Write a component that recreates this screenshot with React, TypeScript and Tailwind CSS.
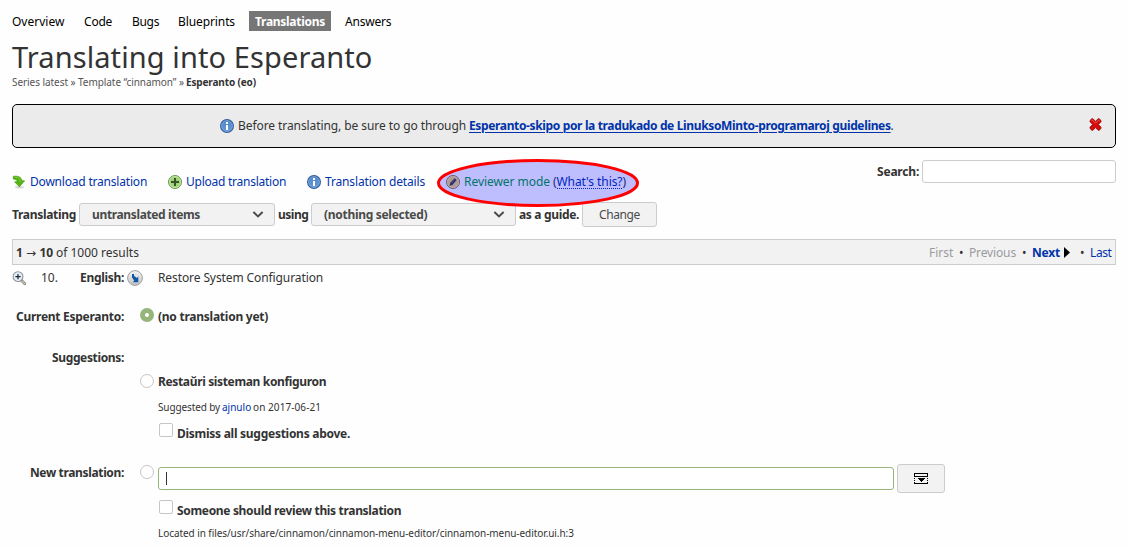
import type { ReactNode } from "react";

function InfoIcon() {
  return (
    <svg className="block h-[14px] w-[14px] shrink-0" viewBox="0 0 14 14">
      <defs>
        <linearGradient id="info" x1="0" y1="0" x2="0" y2="1">
          <stop offset="0" stopColor="#4f86cb" />
          <stop offset="1" stopColor="#6698d6" />
        </linearGradient>
      </defs>
      <circle cx="7" cy="7" r="6.4" fill="url(#info)" stroke="#35609b" strokeWidth="1.2" />
      <circle cx="7" cy="7" r="5.4" fill="none" stroke="#84ade0" strokeWidth=".7" />
      <path d="M6 3h2v2H6zM6 6h2v5H6z" fill="#fff" />
    </svg>
  );
}

function PlusIcon() {
  return (
    <svg className="block h-[14px] w-[14px] shrink-0" viewBox="0 0 14 14">
      <circle cx="7" cy="7" r="6.5" fill="#9fd57a" stroke="#6b9455" />
      <circle cx="7" cy="7" r="5.5" fill="none" stroke="#bfe5a3" strokeWidth=".9" />
      <path d="M6 3h2v3h3v2H8v3H6V8H3V6h3z" fill="#3b5229" />
    </svg>
  );
}

function DownloadIcon() {
  return (
    <svg className="block h-[14px] w-[14px] shrink-0" viewBox="0 0 14 14">
      <ellipse cx="7.5" cy="12.3" rx="4.5" ry="1.2" fill="#d8d8d8" />
      <path d="M1.3 1.4C5 .6 9.6 1.6 9.8 5.8H12.5L7.4 11.8 2.6 6.8H5.2C5.2 4.8 4 4.2 1.3 4z" fill="#55b413" stroke="#45950f" strokeWidth=".7" />
      <path d="M3 2.2C6.5 2 8.3 4 8.4 7" fill="none" stroke="#7fd344" strokeWidth=".8" />
    </svg>
  );
}

function PencilIcon() {
  return (
    <svg className="block h-[14px] w-[14px] shrink-0" viewBox="0 0 14 14">
      <circle cx="7" cy="7" r="6.5" fill="#e8cf72" stroke="#8d7a3e" />
      <circle cx="7" cy="7" r="5.5" fill="none" stroke="#f3e1a3" strokeWidth=".8" />
      <path d="M3.6 10.7l.7-2.9 4.3-4.6 2.1 1.9-4.4 4.8z" fill="#3c3c30" />
      <path d="M5.2 8.3l3.7-4" stroke="#88866f" strokeWidth=".6" />
    </svg>
  );
}

function RemoveIcon() {
  return (
    <svg className="block h-[13px] w-[13px]" viewBox="0 0 13 13">
      <path d="M1 2.5L2.8.8H4l2.5 2.6L9 .8h1.2L12 2.5v1.3L9.4 6.5 12 9.2v1.3l-1.8 1.7H9L6.5 9.6 4 12.2H2.8L1 10.5V9.2l2.6-2.7L1 3.8z" fill="#d40b0b" stroke="#a00606" strokeWidth=".8" />
      <path d="M2.3 2.9l1.1-.8 3.1 3.1 3.1-3.1 1 .7" fill="none" stroke="#f06a6a" strokeWidth=".8" />
    </svg>
  );
}

function ZoomInIcon() {
  return (
    <svg className="block h-[15px] w-[15px]" viewBox="0 0 15 15">
      <path d="M9.6 9.6l3.2 3.2" stroke="#85857e" strokeWidth="2.8" strokeLinecap="round" />
      <path d="M10 10l2.7 2.7" stroke="#cfcbbb" strokeWidth="1.2" strokeLinecap="round" />
      <circle cx="6" cy="5.6" r="4.9" fill="#e4eefa" stroke="#8f959b" strokeWidth="1.1" />
      <path d="M5.4 3h1.2v2h2v1.2h-2v2H5.4v-2h-2V5h2z" fill="#1c2733" />
    </svg>
  );
}

function CopyIcon() {
  return (
    <svg className="block h-4 w-4" viewBox="0 0 16 16">
      <defs>
        <linearGradient id="copy" x1="0" y1="0" x2="0" y2="1">
          <stop offset="0" stopColor="#f4f4f4" />
          <stop offset="1" stopColor="#c2c2c2" />
        </linearGradient>
      </defs>
      <circle cx="8" cy="8" r="7.4" fill="url(#copy)" stroke="#a0a0a0" strokeWidth="1" />
      <path d="M5 3.9h1.9l.3 2 2.6 2 1.5-1.3v5.6H5.9l1.3-1.7L5 7.6z" fill="#1258a8" />
    </svg>
  );
}

function DropdownIcon() {
  return (
    <svg className="block h-[11px] w-[14px]" viewBox="0 0 14 11" shapeRendering="crispEdges">
      <path d="M0 0h14v4H0zM1 1v2h12V1z" fill="#000" fillRule="evenodd" />
      <path d="M0 5h1v1H0zM13 5h1v1h-1zM0 7h1v1H0zM13 7h1v1h-1zM0 9h1v2H0zM13 9h1v2h-1zM1 10h12v1H1z" fill="#000" />
      <path d="M4 5h7v1h-1v1H9v1H8v1H7V8H6V7H5V6H4z" fill="#000" />
    </svg>
  );
}

function Chevron() {
  return (
    <svg className="mr-[10px] block h-[7px] w-[12px]" viewBox="0 0 12 7">
      <path d="M1.4 1l4.6 4.4L10.6 1" fill="none" stroke="#4a4a4a" strokeWidth="2" />
    </svg>
  );
}

function Select({ className, children }: { className: string; children: ReactNode }) {
  return (
    <div className={`flex h-[23px] items-center justify-between rounded-[3px] border border-[#cccccc] bg-[#f2f2f2] pl-3 font-bold leading-5 text-[#4a4a4a] ${className}`}>
      {children}
      <Chevron />
    </div>
  );
}

function Radio({ checked = false, className = "" }: { checked?: boolean; className?: string }) {
  return checked ? (
    <span className={`flex h-[14px] w-[14px] shrink-0 items-center justify-center rounded-full bg-[#96b57a] ${className}`}>
      <span className="h-1 w-1 rounded-full bg-white" />
    </span>
  ) : (
    <span className={`h-[14px] w-[14px] shrink-0 rounded-full border border-[#c6c6c6] bg-white ${className}`} />
  );
}

function Checkbox() {
  return <span className="ml-px mr-1 h-[14px] w-[14px] shrink-0 rounded-[2px] border border-[#c6c6c6] bg-white" />;
}

function Label({ children, className = "" }: { children: ReactNode; className?: string }) {
  return <div className={`flex h-5 w-28 shrink-0 justify-end font-bold ${className}`}>{children}</div>;
}

export default function App() {
  return (
    <div className="h-[546px] w-[1129px] overflow-hidden whitespace-nowrap bg-[#fefefe] pl-3 pr-[13px] pt-[11px] font-['Noto_Sans',sans-serif] text-[12px] leading-[22px] text-[#333333]">
      <nav className="flex h-5 text-black">
        <a className="w-[72px]">Overview</a>
        <a className="w-12 tracking-[-0.2px]">Code</a>
        <a className="w-[46px] tracking-[-0.3px]">Bugs</a>
        <a className="w-[71px] tracking-[-0.1px]">Blueprints</a>
        <a className="mr-[14px] w-[82px] bg-[#767676] pl-[6px] font-bold tracking-[-0.28px] text-white">Translations</a>
        <a className="tracking-[-0.2px]">Answers</a>
      </nav>

      <h1 className="mt-[6px] h-[35px] text-[29px] leading-10 tracking-[0.1px]">Translating into Esperanto</h1>
      <div className="flex h-5 text-[10px] leading-5">
        <span className="w-[174px] tracking-[-0.06px] text-[#555555]">Series latest » Template “cinnamon” »</span>
        <b className="tracking-[-0.14px]">Esperanto (eo)</b>
      </div>

      <div className="mt-3 flex h-[44px] items-start rounded-[5px] border border-black bg-[#ebebeb] pl-[207px] pt-[10px]">
        <span className="mr-1 mt-1"><InfoIcon /></span>
        <span className="w-[231px] tracking-[-0.08px]">Before translating, be sure to go through</span>
        <a className="font-bold tracking-[-0.355px] text-[#0033aa] underline decoration-1 underline-offset-2">Esperanto-skipo por la tradukado de LinuksoMinto-programaroj guidelines</a>
        <span>.</span>
        <span className="ml-auto mr-[13px] mt-[3px]"><RemoveIcon /></span>
      </div>

      <div className="flex h-[91px] justify-between">
        <div className="pt-[23px]">
          <div className="flex h-[22px] items-center text-[#0033aa]">
            <a className="flex w-[156px] items-center gap-1"><DownloadIcon /><span className="tracking-[-0.2px]">Download translation</span></a>
            <a className="flex w-[139px] items-center gap-1"><PlusIcon /><span className="tracking-[-0.25px]">Upload translation</span></a>
            <a className="flex w-[139px] items-center gap-1"><InfoIcon /><span className="tracking-[-0.15px]">Translation details</span></a>
            <div className="relative flex h-[22px] items-center">
              <PencilIcon />
              <span className="ml-1 w-[89px] tracking-[-0.05px] text-[#009933]">Reviewer mode</span>
              <span className="flex h-[22px] tracking-[-0.08px] text-[#333333]">(<span className="h-[18px] border-b border-dotted border-[#0033aa] text-[#0033aa]">What's this?</span>)</span>
              <svg className="pointer-events-none absolute -left-[9px] -top-[12px] h-[48px] w-[202px]" viewBox="0 0 202 48">
                <ellipse cx="101" cy="24" rx="99.5" ry="22.5" fill="#0000ff" fillOpacity=".25" stroke="#ff0000" strokeWidth="3" />
              </svg>
            </div>
          </div>
          <div className="mt-[9px] flex h-[25px] items-center font-bold">
            <span className="w-[67px] tracking-[-0.3px]">Translating</span>
            <Select className="w-[196px] tracking-[-0.36px]">untranslated items</Select>
            <span className="ml-[3px] w-[33px] tracking-[-0.5px]">using</span>
            <Select className="w-[205px] tracking-[-0.3px]">(nothing selected)</Select>
            <span className="ml-[3px] w-[63px] tracking-[-0.33px]">as a guide.</span>
            <button className="flex h-[25px] w-[75px] items-center justify-center rounded-[3px] border border-[#cccccc] bg-[#f2f2f2] font-normal tracking-[-0.38px] text-[#4a4a4a]">Change</button>
          </div>
        </div>
        <div className="flex pt-3">
          <span className="w-[45px] pt-px font-bold tracking-[-0.2px]">Search:</span>
          <div className="h-[23px] w-[194px] rounded-[3px] border border-[#cccccc] bg-white" />
        </div>
      </div>

      <div className="flex h-[26px] border border-[#cccccc] bg-[#f2f2f2] pl-[3px] pr-1 pt-[2px]">
        <b className="flex w-10 tracking-[-0.3px]">
          1
          <span className="w-[17px] text-center font-['DejaVu_Sans'] text-[12px] font-normal tracking-normal">→</span>
          10
        </b>
        <span>of 1000 results</span>
        <div className="ml-auto flex text-[#9a9a9f]">
          <span className="w-[30px]">First</span>
          <span className="w-[10px] text-[#333333]">•</span>
          <span className="w-[53px] tracking-[-0.14px]">Previous</span>
          <span className="w-[10px] text-[#333333]">•</span>
          <b className="w-[32px] tracking-[-0.2px] text-[#0033aa]">Next</b>
          <svg className="mr-[10px] mt-[5px] block h-[11px] w-[6px]" viewBox="0 0 6 11"><path d="M0 0l6 5.5L0 11z" fill="#000" /></svg>
          <span className="w-[10px] text-[#333333]">•</span>
          <span className="w-[21px] tracking-[-0.4px] text-[#0033aa]">Last</span>
        </div>
      </div>

      <div className="mt-[2px] flex h-5">
        <span className="w-[29px] pt-1"><ZoomInIcon /></span>
        <span className="w-[39px]">10.</span>
        <b className="w-[47px] tracking-[-0.3px]">English:</b>
        <span className="w-[31px] pt-[3px]"><CopyIcon /></span>
        <span className="tracking-[-0.1px]">Restore System Configuration</span>
      </div>

      <div className="mt-[19px] flex h-5">
        <Label className="tracking-[-0.28px]">Current Esperanto:</Label>
        <Radio checked className="ml-4 mr-1 mt-[2px]" />
        <b className="tracking-[-0.25px]">(no translation yet)</b>
      </div>

      <div className="mt-[21px] flex">
        <Label className="tracking-[-0.35px]">Suggestions:</Label>
        <div className="ml-4 pt-6">
          <div className="flex h-5">
            <Radio className="mr-1 mt-[3px]" />
            <b className="tracking-[-0.35px]">Restaŭri sisteman konfiguron</b>
          </div>
          <div className="ml-[18px] mt-[6px] flex h-5 text-[10px] leading-5">
            <span className="w-16 tracking-[-0.12px]">Suggested by</span>
            <a className="w-[31px] text-[#0033aa]">ajnulo</a>
            <span className="tracking-[0.08px]">on 2017-06-21</span>
          </div>
          <div className="ml-[18px] mt-[6px] flex h-5">
            <Checkbox />
            <b className="tracking-[-0.27px]">Dismiss all suggestions above.</b>
          </div>
        </div>
      </div>

      <div className="mt-[19px] flex">
        <Label className="tracking-[-0.35px]">New translation:</Label>
        <Radio className="ml-4 mr-1 mt-[3px]" />
        <div className="pt-[2px]">
          <div className="flex items-center">
            <div className="mr-[3px] flex h-[23px] w-[736px] items-center rounded-[3px] border border-[#96b57a] bg-white pl-[7px]">
              <span className="h-[13px] w-px bg-[#333333]" />
            </div>
            <button className="flex h-[29px] w-12 items-center justify-center rounded-[3px] border border-[#cccccc] bg-[#f2f2f2]">
              <DropdownIcon />
            </button>
          </div>
          <div className="mt-[7px] flex h-5">
            <Checkbox />
            <b className="tracking-[-0.33px]">Someone should review this translation</b>
          </div>
          <div className="mt-[3px] text-[10px] leading-5 tracking-[-0.07px]">Located in files/usr/share/cinnamon/cinnamon-menu-editor/cinnamon-menu-editor.ui.h:3</div>
        </div>
      </div>
    </div>
  );
}
